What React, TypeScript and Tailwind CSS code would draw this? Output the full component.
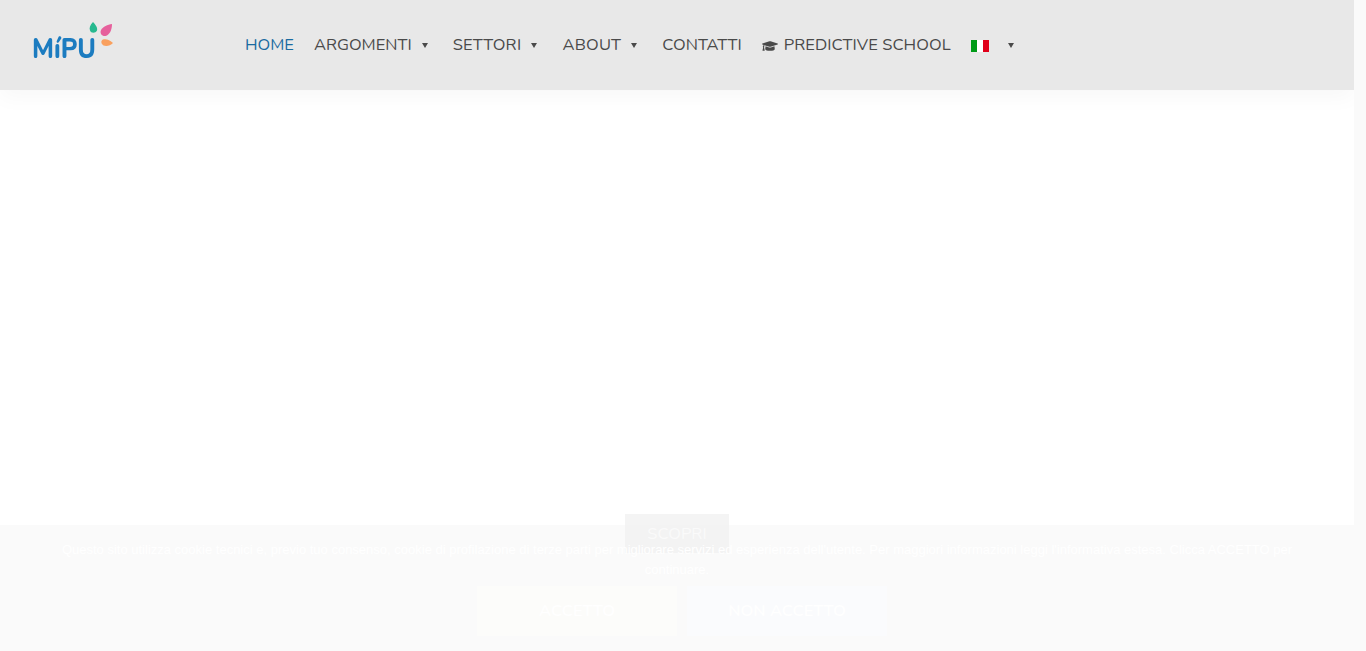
import { FaGraduationCap } from "react-icons/fa";

const nunito = "font-['Nunito','Open_Sans','Noto_Sans',sans-serif]";

function Caret() {
  return <span className="ml-[10px] mr-[5px] h-0 w-0 border-x-[3.5px] border-t-[5px] border-x-transparent border-t-[#4a4a4a]" />;
}

function Item({ label, caret, active, tracking }: { label: string; caret?: boolean; active?: boolean; tracking?: string }) {
  return (
    <a className={`flex items-center whitespace-nowrap ${tracking ?? ""} ${active ? "text-[#1a6ba0]" : "text-[#4a4a4a]"}`}>
      {label}
      {caret && <Caret />}
    </a>
  );
}

function Logo() {
  return (
    <svg width="90" height="48" viewBox="0 0 90 48" className="shrink-0 blur-[0.4px]">
      <text x="0" y="36.5" fontFamily="'Nunito','Open Sans',sans-serif" fontSize="27" fontWeight="800" fill="#1c7cc0" textLength="64" lengthAdjust="spacingAndGlyphs">MíPU</text>
      <path d="M61 1 C58 4 57 7 58 9.5 C59 12.5 63.5 12.5 65 9.5 C66 7 63.5 3.5 61 1Z" fill="#27b98f" />
      <path d="M80 3 C75.5 3.5 71 5.5 69 9 C67.5 12.5 70 15.5 73.5 15 C77.5 14 80 9 80 3Z" fill="#e6609c" />
      <path d="M81 22 C78 19 74 17.5 71 18.5 C68.5 19.5 69 23 71.5 24.5 C75 25.5 78.5 24.5 81 22Z" fill="#f9a05e" />
    </svg>
  );
}

export default function App() {
  return (
    <div className="relative flex h-[651px] overflow-hidden bg-white">
      <div className="flex min-w-0 flex-1 flex-col">
        <header className={`flex h-[90px] shrink-0 items-center bg-[#e8e8e8] pl-[32px] text-[16.5px] shadow-[0_8px_20px_rgba(0,0,0,0.03)] ${nunito}`}>
          <Logo />
          <nav className="ml-[123px] flex items-center gap-[20px] pt-[1px]">
            <Item label="HOME" active />
            <Item label="ARGOMENTI" caret />
            <Item label="SETTORI" caret tracking="tracking-[0.28px]" />
            <Item label="ABOUT" caret tracking="tracking-[0.2px]" />
            <Item label="CONTATTI" />
            <a className="flex items-center gap-[6px] whitespace-nowrap tracking-[0.06px] text-[#4a4a4a]">
              <FaGraduationCap className="text-[16px]" />
              PREDICTIVE SCHOOL
            </a>
            <a className="flex items-center">
              <span className="flex h-[12px] w-[18px]">
                <span className="flex-1 bg-[#009a17]" />
                <span className="flex-1 bg-white" />
                <span className="flex-1 bg-[#e0001a]" />
              </span>
              <span className="ml-[19px] h-0 w-0 border-x-[3.5px] border-t-[5px] border-x-transparent border-t-[#4a4a4a]" />
            </a>
          </nav>
        </header>
        <main className="flex flex-1 flex-col items-center">
          <a className={`mt-[424px] flex h-[39px] w-[104px] items-center justify-center bg-[#f4f4f4] pt-[1px] text-[16.5px] text-white ${nunito}`}>SCOPRI</a>
        </main>
      </div>
      <div className="w-[12px] shrink-0 bg-[#fafafa]" />
      <div className="absolute bottom-0 left-0 right-[12px] h-[126px] bg-[rgba(241,241,241,0.36)] pt-[15px] text-center">
        <p className="mx-auto w-[1240px] font-['Liberation_Sans',sans-serif] text-[13px] leading-[20px] text-white">
          Questo sito utilizza cookie tecnici e, previo tuo consenso, cookie di profilazione di terze parti per migliorare servizi ed esperienza dell'utente. Per maggiori informazioni leggi l'informativa estesa. Clicca ACCETTO per continuare.
        </p>
        <div className={`ml-[10px] mt-[6px] flex justify-center gap-[10px] text-[16.5px] font-semibold text-white ${nunito}`}>
          <button className="h-[50px] w-[200px] bg-[#fcfcfa] pt-[1px]">ACCETTO</button>
          <button className="h-[50px] w-[200px] bg-[#fafbfd] pt-[1px]">NON ACCETTO</button>
        </div>
      </div>
    </div>
  );
}
